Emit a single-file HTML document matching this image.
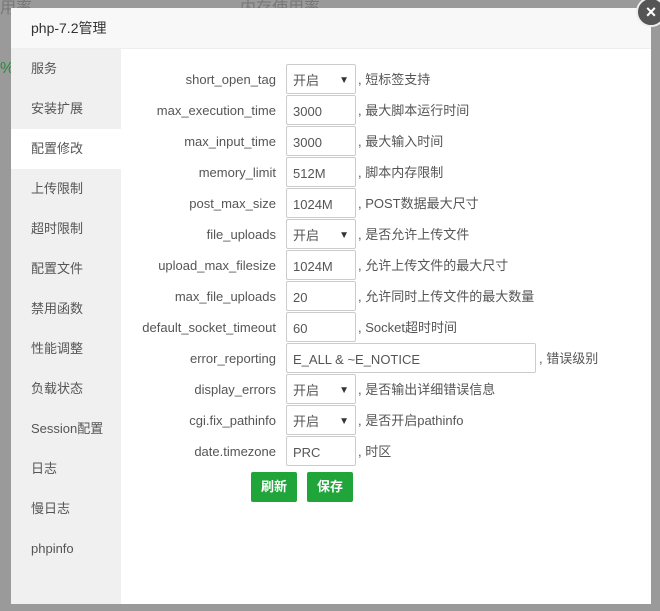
<!DOCTYPE html>
<html><head><meta charset="utf-8"><style>
body{margin:0;width:660px;height:611px;background:#9a9a9a;position:relative;overflow:hidden;font-family:"Liberation Sans","Noto Sans CJK SC",sans-serif;font-size:13px;color:#555}
.bgtxt{position:absolute;color:#777;font-size:16px}
.dlg{position:absolute;left:11px;top:8px;width:640px;height:596px;background:#fff}
.hd{height:40px;background:#f8f8f8;border-bottom:1px solid #eee;line-height:40px;padding-left:20px;font-size:14px;color:#333}
.side{position:absolute;left:0;top:41px;width:110px;bottom:0;background:#f0f0f0}
.side div{height:40px;line-height:40px;padding-left:20px;color:#555}
.side div.on{background:#fff}
.row{position:absolute;left:110px;height:31px;width:530px}
.row .l{position:absolute;right:375px;top:1px;line-height:30px;white-space:nowrap;color:#555}
.row .b{position:absolute;left:165px;top:0;width:68px;height:28px;border:1px solid #ccc;border-radius:2px;line-height:31px;padding-left:0;color:#555}
.row .b span{padding-left:6px}
.row .b i{position:absolute;right:6px;top:0;font-style:normal;font-size:10px;color:#333}
.row .d{position:absolute;top:1px;line-height:30px;color:#555;white-space:nowrap}
.btn{position:absolute;top:472px;width:46px;height:30px;background:#20a53a;color:#fff;border-radius:2px;text-align:center;line-height:30px;font-weight:bold;font-size:13px}
.x{position:absolute;left:636px;top:-3px;width:26px;height:26px;border-radius:50%;background:#555;border:2px solid #eee;color:#fff;text-align:center;line-height:26px;font-size:18px;font-weight:bold}
</style></head><body>
<div class="bgtxt" style="left:0;top:-6px">用率</div>
<div class="bgtxt" style="left:240px;top:-6px">内存使用率</div>
<div class="bgtxt" style="left:0;top:60px;color:#2a8a3a">%</div>
<div class="dlg">
<div class="hd">php-7.2管理</div>
<div class="side">
<div>服务</div><div>安装扩展</div><div class="on">配置修改</div><div>上传限制</div><div>超时限制</div><div>配置文件</div><div>禁用函数</div><div>性能调整</div><div>负载状态</div><div>Session配置</div><div>日志</div><div>慢日志</div><div>phpinfo</div>
</div>
</div>
<div class="x">×</div>
<div style="position:absolute;left:11px;top:8px;width:640px;height:596px">
<div class="row" style="top:56px"><div class="l">short_open_tag</div><div class="b"><span>开启</span><i>▼</i></div><div class="d" style="left:237px">, 短标签支持</div></div>
<div class="row" style="top:87px"><div class="l">max_execution_time</div><div class="b"><span>3000</span></div><div class="d" style="left:237px">, 最大脚本运行时间</div></div>
<div class="row" style="top:118px"><div class="l">max_input_time</div><div class="b"><span>3000</span></div><div class="d" style="left:237px">, 最大输入时间</div></div>
<div class="row" style="top:149px"><div class="l">memory_limit</div><div class="b"><span>512M</span></div><div class="d" style="left:237px">, 脚本内存限制</div></div>
<div class="row" style="top:180px"><div class="l">post_max_size</div><div class="b"><span>1024M</span></div><div class="d" style="left:237px">, POST数据最大尺寸</div></div>
<div class="row" style="top:211px"><div class="l">file_uploads</div><div class="b"><span>开启</span><i>▼</i></div><div class="d" style="left:237px">, 是否允许上传文件</div></div>
<div class="row" style="top:242px"><div class="l">upload_max_filesize</div><div class="b"><span>1024M</span></div><div class="d" style="left:237px">, 允许上传文件的最大尺寸</div></div>
<div class="row" style="top:273px"><div class="l">max_file_uploads</div><div class="b"><span>20</span></div><div class="d" style="left:237px">, 允许同时上传文件的最大数量</div></div>
<div class="row" style="top:304px"><div class="l">default_socket_timeout</div><div class="b"><span>60</span></div><div class="d" style="left:237px">, Socket超时时间</div></div>
<div class="row" style="top:335px"><div class="l">error_reporting</div><div class="b" style="width:248px"><span>E_ALL &amp; ~E_NOTICE</span></div><div class="d" style="left:418px">, 错误级别</div></div>
<div class="row" style="top:366px"><div class="l">display_errors</div><div class="b"><span>开启</span><i>▼</i></div><div class="d" style="left:237px">, 是否输出详细错误信息</div></div>
<div class="row" style="top:397px"><div class="l">cgi.fix_pathinfo</div><div class="b"><span>开启</span><i>▼</i></div><div class="d" style="left:237px">, 是否开启pathinfo</div></div>
<div class="row" style="top:428px"><div class="l">date.timezone</div><div class="b"><span>PRC</span></div><div class="d" style="left:237px">, 时区</div></div>
</div>
<div class="btn" style="left:251px">刷新</div>
<div class="btn" style="left:307px">保存</div>
</body></html>
